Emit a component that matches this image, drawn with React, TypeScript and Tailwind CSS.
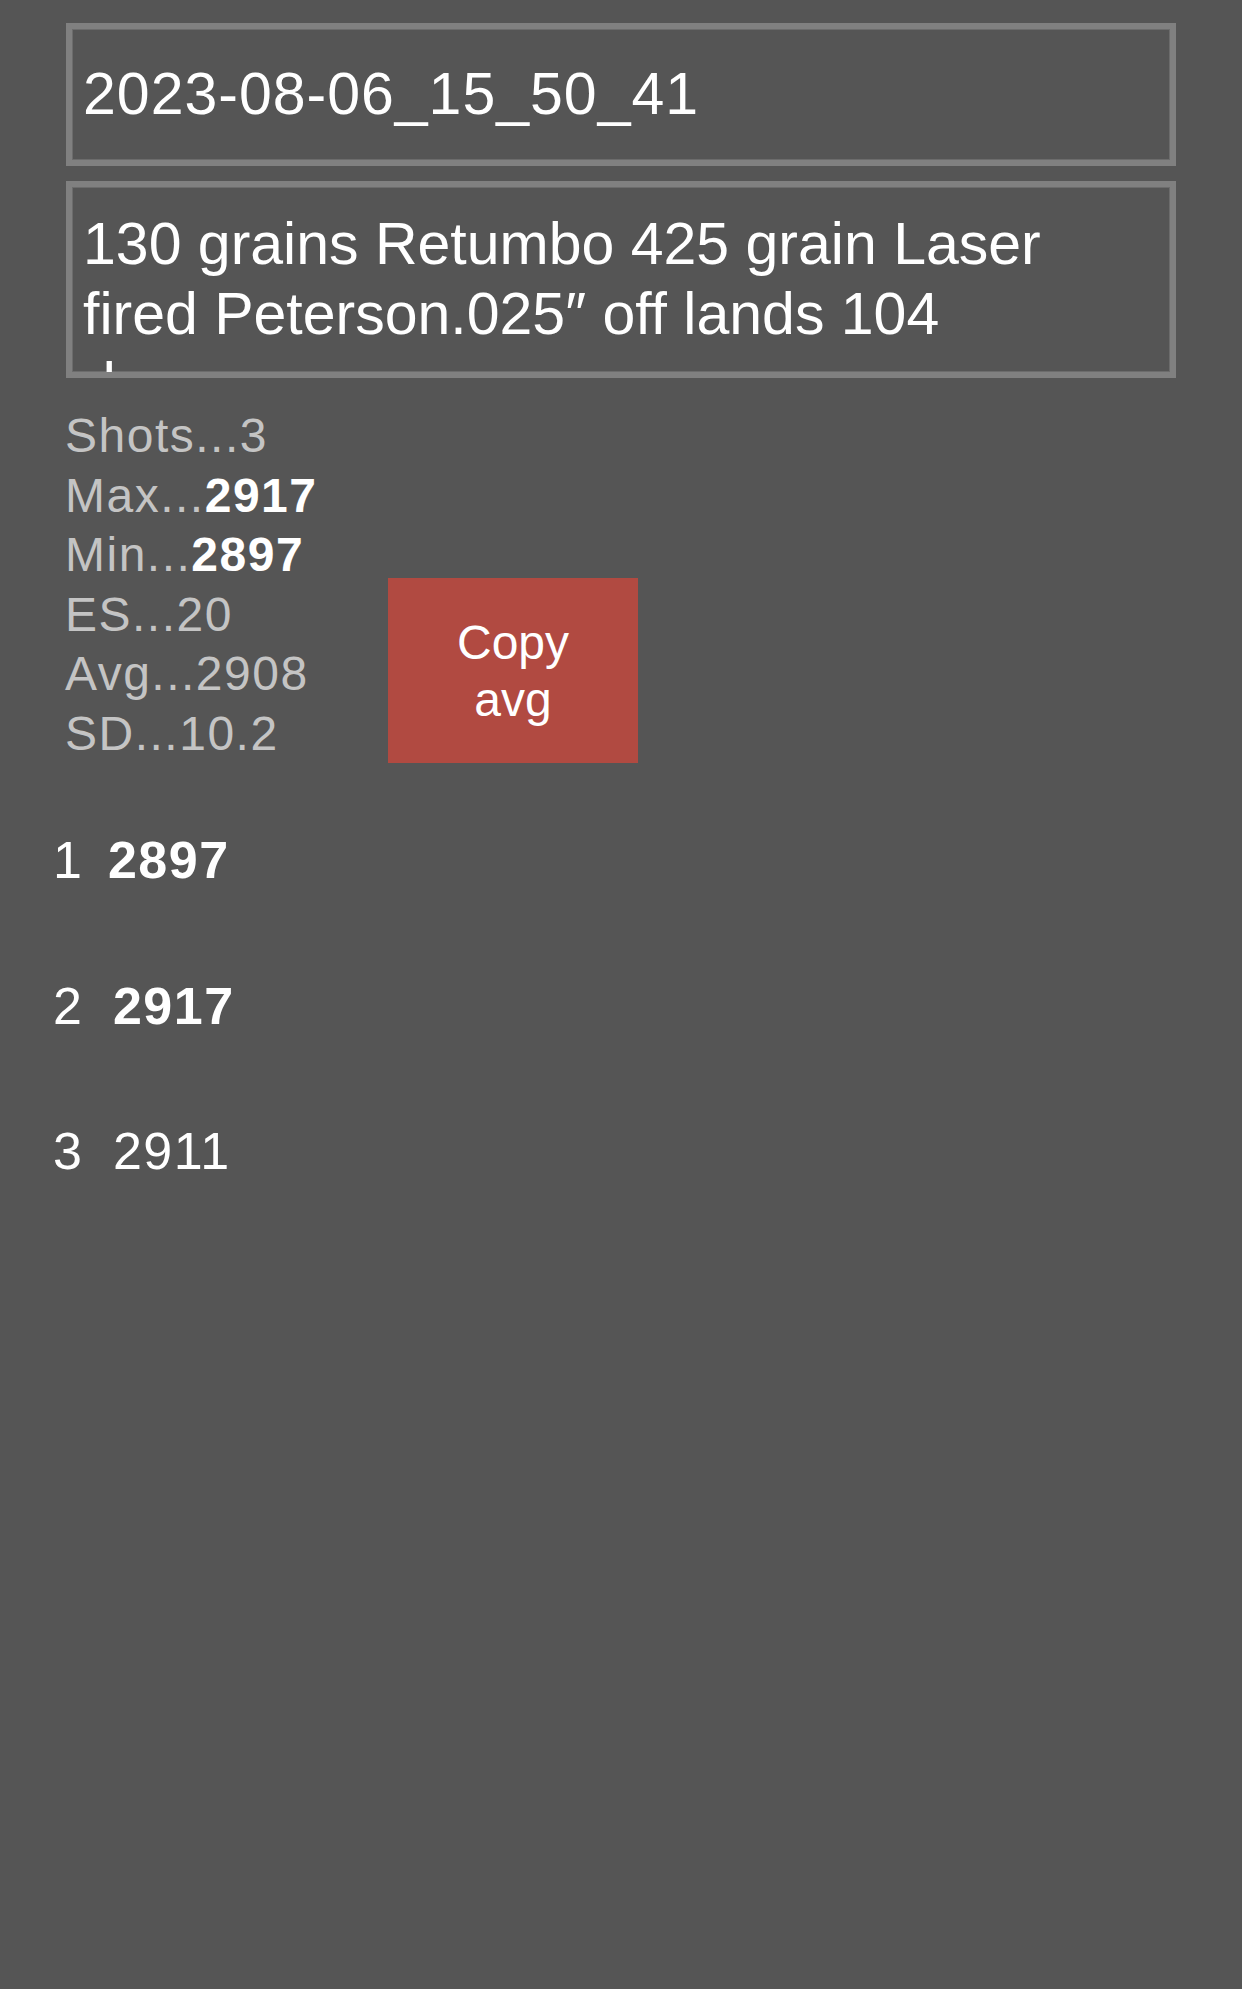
import React from "react";

const stats = [
  { label: "Shots...", value: "3", bold: false },
  { label: "Max...", value: "2917", bold: true },
  { label: "Min...", value: "2897", bold: true },
  { label: "ES...", value: "20", bold: false },
  { label: "Avg...", value: "2908", bold: false },
  { label: "SD...", value: "10.2", bold: false },
];

const shots = [
  { n: 1, v: "2897", bold: true, gap: "ml-[26px]" },
  { n: 2, v: "2917", bold: true, gap: "ml-[31px]" },
  { n: 3, v: "2911", bold: false, gap: "ml-[31px]" },
];

export default function App() {
  return (
    <div className="min-h-[1989px] w-full bg-[#555555] font-['Liberation_Sans',Arial,sans-serif] text-white">
      <div className="pt-[23px] pl-[66px] pr-[66px]">
        {/* Name field */}
        <div className="h-[143px] border-[6px] border-[#808080] shadow-[inset_0_0_0_1px_#6c6c6c] flex items-center pl-[11px]">
          <span className="text-[59px] leading-none tracking-[1px]">2023-08-06_15_50_41</span>
        </div>

        {/* Notes field */}
        <div className="mt-[15px] h-[197px] border-[6px] border-[#808080] shadow-[inset_0_0_0_1px_#6c6c6c] overflow-hidden pl-[11px] pt-[22px]">
          <p className="text-[59px] leading-[70px] w-[1000px]">
            130 grains Retumbo 425 grain Laser fired Peterson.025″ off lands 104 degrees
          </p>
        </div>
      </div>

      {/* Stats + copy button */}
      <div className="mt-[28px] pl-[65px] flex items-end">
        <div className="w-[323px] text-[48px] leading-[59.5px] tracking-[1.5px] text-[#c4c4c4]">
          {stats.map((s) => (
            <div key={s.label}>
              {s.label}
              <span className={s.bold ? "font-bold text-white" : ""}>{s.value}</span>
            </div>
          ))}
        </div>
        <button className="w-[250px] h-[185px] bg-[#b14a41] text-white text-[48px] leading-[57px] flex items-center justify-center text-center">
          Copy
          <br />
          avg
        </button>
      </div>

      {/* Shot list */}
      <div className="mt-[25px] pl-[53px]">
        {shots.map((s) => (
          <div key={s.n} className="flex h-[145.5px] leading-[145.5px] text-[52px]">
            <span>{s.n}</span>
            <span className={(s.bold ? "font-bold " : "") + "tracking-[1.5px] " + s.gap}>{s.v}</span>
          </div>
        ))}
      </div>
    </div>
  );
}
